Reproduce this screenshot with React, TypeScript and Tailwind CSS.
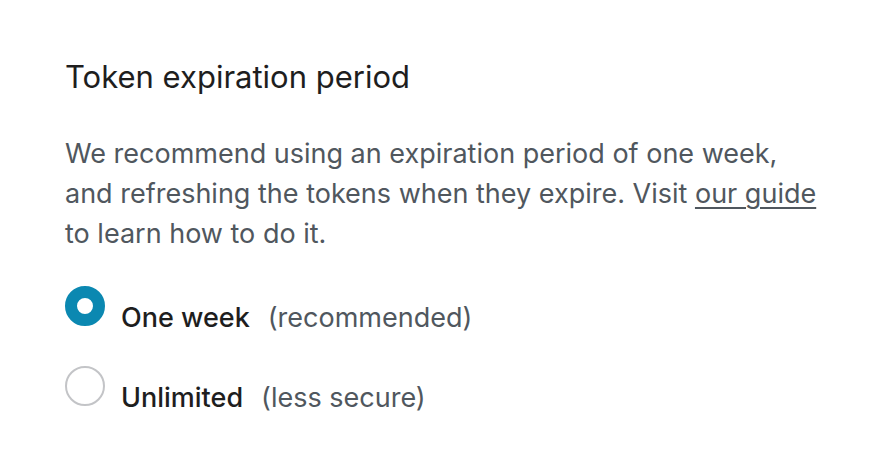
export default function App() {
  return (
    <div className="min-h-[476px] w-[886px] bg-white px-[65px] pt-[58px] font-['Inter',sans-serif] text-[#1e1e1e]">
      <h2 className="text-[31px] leading-[38px] font-normal">Token expiration period</h2>
      <p className="mt-[38px] text-[27px] leading-[40px] text-[#50575e]">
        We recommend using an expiration period of one week,
        <br />
        and refreshing the tokens when they expire. Visit{" "}
        <a href="#" className="underline decoration-2 underline-offset-[4px]">
          our guide
        </a>
        <br />
        to learn how to do it.
      </p>
      <div className="mt-[28px] flex flex-col gap-[30px]">
        <label className="flex items-start">
          <span className="mt-[4px] h-[40px] w-[40px] shrink-0 rounded-full border-[12px] border-[#0b88b1] bg-white" />
          <span className="ml-[16px] mt-[22px] text-[27px] leading-[28px]">
            <span className="font-medium">One week</span>
            <span className="ml-[18px] text-[#50575e]">(recommended)</span>
          </span>
        </label>
        <label className="flex items-start">
          <span className="mt-[4px] h-[40px] w-[40px] shrink-0 rounded-full border-2 border-[#c3c4c7] bg-white" />
          <span className="ml-[16px] mt-[22px] text-[27px] leading-[28px]">
            <span className="font-medium">Unlimited</span>
            <span className="ml-[18px] text-[#50575e]">(less secure)</span>
          </span>
        </label>
      </div>
    </div>
  );
}
